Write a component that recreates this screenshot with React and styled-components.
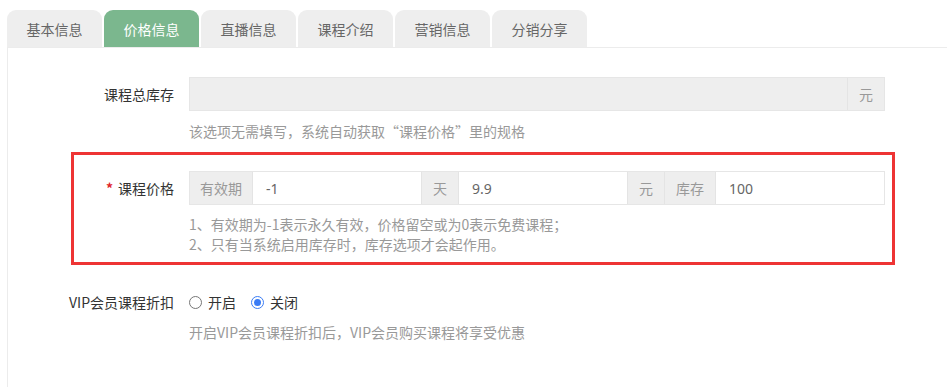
import React, { useState } from 'react';
import styled, { createGlobalStyle } from 'styled-components';

const GlobalStyle = createGlobalStyle`
  html, body {
    margin: 0;
    padding: 0;
    background: #fff;
    font-family: "Noto Sans CJK SC", "Noto Sans", sans-serif;
    font-size: 14px;
    color: #333;
  }
`;

const Page = styled.div`
  padding: 10px 0 0 7px;
  min-height: 387px;
  box-sizing: border-box;
  display: flex;
  flex-direction: column;
`;

const TabBar = styled.div`
  display: flex;
  gap: 2px;
`;

const Tab = styled.div`
  width: 95px;
  height: 37px;
  display: flex;
  align-items: center;
  justify-content: center;
  border-radius: 9px 9px 0 0;
  background: ${p => (p.$active ? '#7bb78e' : '#eeeeee')};
  color: ${p => (p.$active ? '#fff' : '#666')};
  font-size: 14px;
  cursor: pointer;
`;

const Panel = styled.div`
  flex: 1;
  border-top: 1px solid #ececec;
  border-left: 1px solid #ececec;
  padding: 29px 62px 0 0;
  display: flex;
  flex-direction: column;
`;

const FormItem = styled.div`
  position: relative;
  display: grid;
  grid-template-columns: 166px 1fr;
  column-gap: 15px;
  margin-top: ${p => p.$top || 0}px;

  ${p =>
    p.$highlight &&
    `
    &::after {
      content: '';
      position: absolute;
      left: 63px;
      right: -10px;
      top: -19px;
      bottom: -11px;
      border: 3px solid #ee3434;
      pointer-events: none;
    }
  `}
`;

const Label = styled.div`
  text-align: right;
  line-height: ${p => p.$lh || 34}px;
  color: #333;
  white-space: nowrap;
`;

const Star = styled.span`
  color: #e0262b;
  font-weight: bold;
  margin-right: 5px;
`;

const Control = styled.div`
  display: flex;
  flex-direction: column;
`;

const Group = styled.div`
  display: flex;
  height: 34px;
  box-sizing: border-box;
  border: 1px solid #e6e6e6;
  background: #fff;
`;

const Addon = styled.div`
  display: flex;
  align-items: center;
  padding: 0 ${p => p.$pad || 11}px;
  background: #eeeeee;
  color: #999;
  border-left: ${p => (p.$first ? 'none' : '1px solid #e4e4e4')};
  white-space: nowrap;
`;

const Input = styled.div`
  flex: 1;
  display: flex;
  align-items: center;
  padding: 0 13px;
  color: #666;
  font-family: "Noto Sans", "Noto Sans CJK SC", sans-serif;
  background: ${p => (p.$disabled ? '#eeeeee' : '#fff')};
  border-left: ${p => (p.$first ? 'none' : '1px solid #e4e4e4')};
`;

const Hint = styled.div`
  margin-top: ${p => p.$top || 10}px;
  color: #999;
  font-size: 14px;
  line-height: 20px;
`;

const Radios = styled.div`
  display: flex;
  align-items: center;
  height: 20px;
  gap: 15px;
`;

const RadioOption = styled.label`
  display: flex;
  align-items: center;
  gap: 6px;
  cursor: pointer;
  color: #333;
`;

const Dot = styled.span`
  width: 13px;
  height: 13px;
  box-sizing: border-box;
  border-radius: 50%;
  border: 1px solid ${p => (p.$checked ? '#3a7cf5' : '#767676')};
  display: flex;
  align-items: center;
  justify-content: center;

  &::after {
    content: '';
    width: 7px;
    height: 7px;
    border-radius: 50%;
    background: ${p => (p.$checked ? '#3a7cf5' : 'transparent')};
  }
`;

const tabs = ['基本信息', '价格信息', '直播信息', '课程介绍', '营销信息', '分销分享'];

export default function App() {
  const [vip, setVip] = useState('off');

  return (
    <Page>
      <GlobalStyle />
      <TabBar>
        {tabs.map(t => (
          <Tab key={t} $active={t === '价格信息'}>{t}</Tab>
        ))}
      </TabBar>
      <Panel>
        <FormItem>
          <Label>课程总库存</Label>
          <Control>
            <Group>
              <Input $first $disabled />
              <Addon>元</Addon>
            </Group>
            <Hint>该选项无需填写，系统自动获取“课程价格”里的规格</Hint>
          </Control>
        </FormItem>

        <FormItem $top={30} $highlight>
          <Label><Star>*</Star>课程价格</Label>
          <Control>
            <Group>
              <Addon $first $pad={10}>有效期</Addon>
              <Input>-1</Input>
              <Addon>天</Addon>
              <Input>9.9</Input>
              <Addon>元</Addon>
              <Addon>库存</Addon>
              <Input>100</Input>
            </Group>
            <Hint $top={9}>
              1、有效期为-1表示永久有效，价格留空或为0表示免费课程；<br />
              2、只有当系统启用库存时，库存选项才会起作用。
            </Hint>
          </Control>
        </FormItem>

        <FormItem $top={38}>
          <Label $lh={20}>VIP会员课程折扣</Label>
          <Control>
            <Radios>
              <RadioOption onClick={() => setVip('on')}>
                <Dot $checked={vip === 'on'} />开启
              </RadioOption>
              <RadioOption onClick={() => setVip('off')}>
                <Dot $checked={vip === 'off'} />关闭
              </RadioOption>
            </Radios>
            <Hint>开启VIP会员课程折扣后，VIP会员购买课程将享受优惠</Hint>
          </Control>
        </FormItem>
      </Panel>
    </Page>
  );
}
